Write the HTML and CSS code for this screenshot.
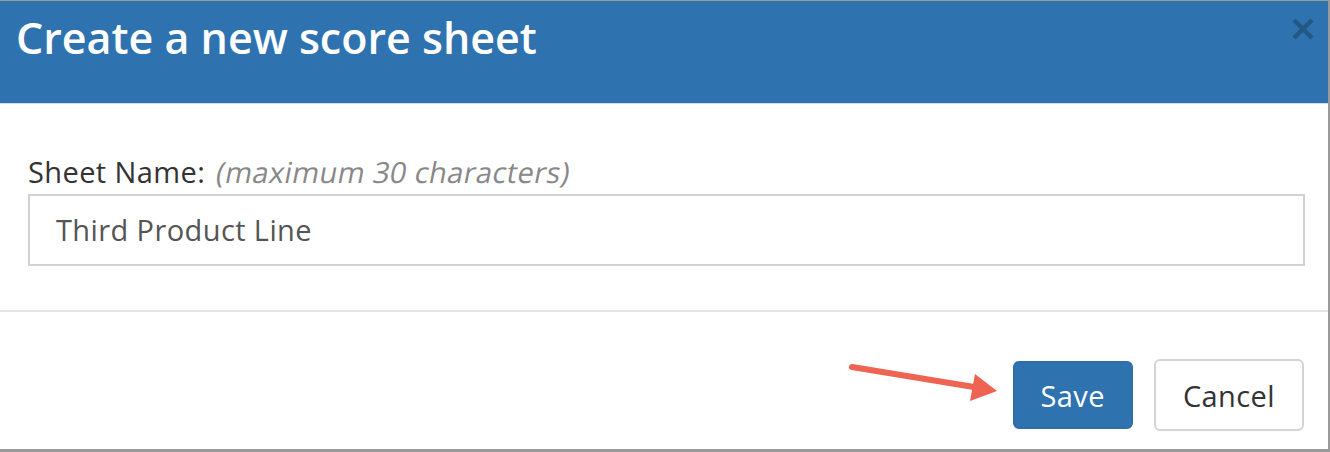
FILE: index.html
```html
<!DOCTYPE html>
<html>
<head>
<meta charset="utf-8">
<link rel="stylesheet" href="styles.css">
</head>
<body>
<div class="modal">
  <div class="modal-header">
    <h1 class="modal-title">Create a new score sheet</h1>
    <svg class="close" width="24" height="24" viewBox="0 0 24 24">
      <path d="M3 3 L21 21 M21 3 L3 21" stroke="currentColor" stroke-width="4.5" fill="none"/>
    </svg>
  </div>
  <div class="modal-body">
    <label class="field-label">Sheet Name: <span class="hint">(maximum 30 characters)</span></label>
    <div class="input">Third Product Line</div>
  </div>
  <div class="modal-footer">
    <svg class="arrow" width="170" height="60" viewBox="0 0 170 60">
      <line x1="12" y1="14" x2="140" y2="35" stroke="#ee6352" stroke-width="6" stroke-linecap="round"/>
      <polygon points="157,38 135,21 130,48" fill="#ee6352"/>
    </svg>
    <button class="btn btn-primary">Save</button>
    <button class="btn btn-default">Cancel</button>
  </div>
</div>
</body>
</html>
```

FILE: styles.css
```css
html, body {
  margin: 0;
  padding: 0;
  background: #ffffff;
}

body {
  font-family: "Open Sans", "Liberation Sans", sans-serif;
  width: 1330px;
  height: 452px;
  overflow: hidden;
}

.modal {
  box-sizing: border-box;
  width: 1330px;
  height: 452px;
  border-top: 1px solid #9a9a9a;
  border-right: 2px solid #9a9a9a;
  border-bottom: 3px solid #9a9a9a;
  display: flex;
  flex-direction: column;
  background: #ffffff;
}

.modal-header {
  box-sizing: border-box;
  height: 103px;
  background: #2e73b0;
  border-bottom: 1px solid #d6dde4;
  padding: 7px 13px 0 16px;
  display: flex;
  justify-content: space-between;
  align-items: flex-start;
}

.modal-title {
  margin: 0;
  font-size: 43px;
  line-height: 60px;
  font-weight: 600;
  color: #ffffff;
}

.close {
  margin-top: 9px;
  color: rgba(0, 0, 0, 0.24);
}

.modal-body {
  box-sizing: border-box;
  height: 208px;
  padding: 48px 23px 0 28px;
  border-bottom: 2px solid #e5e5e5;
}

.field-label {
  display: block;
  font-size: 29px;
  letter-spacing: 0.4px;
  line-height: 40px;
  color: #333333;
  margin-bottom: 2px;
}

.hint {
  display: inline-block;
  color: #888888;
  transform: skewX(-11deg);
  transform-origin: 0 100%;
}

.input {
  box-sizing: border-box;
  height: 72px;
  border: 2px solid #d2d2d2;
  padding: 0 26px;
  font-size: 29px;
  letter-spacing: 0.4px;
  line-height: 68px;
  color: #555555;
}

.modal-footer {
  position: relative;
  flex: 1;
  display: flex;
  justify-content: flex-end;
  align-items: flex-start;
  gap: 21px;
  padding: 47px 24px 0 0;
}

.arrow {
  position: absolute;
  left: 840px;
  top: 41px;
}

.btn {
  box-sizing: border-box;
  font-family: "Open Sans", "Liberation Sans", sans-serif;
  font-size: 29px;
  letter-spacing: 0.4px;
  border-radius: 6px;
  padding: 0 26px;
  cursor: pointer;
}

.btn-primary {
  height: 68px;
  margin-top: 2px;
  background: #2e73b0;
  border: 2px solid #2e6ea9;
  color: #ffffff;
}

.btn-default {
  height: 72px;
  background: #ffffff;
  border: 2px solid #d4d4d4;
  color: #333333;
  padding: 0 27px;
}
```
